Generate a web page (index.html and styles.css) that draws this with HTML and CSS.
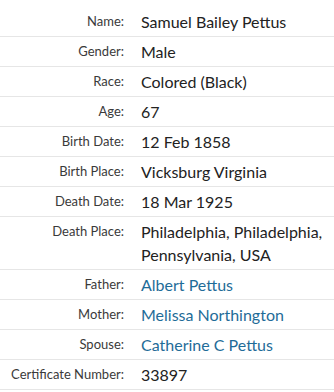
FILE: index.html
```html
<!DOCTYPE html>
<html>
<head>
<meta charset="utf-8">
<link rel="stylesheet" href="styles.css">
</head>
<body>
<div class="facts">
  <div class="row"><div class="label">Name:</div><div class="value">Samuel Bailey Pettus</div></div>
  <div class="row"><div class="label">Gender:</div><div class="value">Male</div></div>
  <div class="row"><div class="label">Race:</div><div class="value">Colored (Black)</div></div>
  <div class="row"><div class="label">Age:</div><div class="value">67</div></div>
  <div class="row"><div class="label">Birth Date:</div><div class="value">12 Feb 1858</div></div>
  <div class="row"><div class="label">Birth Place:</div><div class="value">Vicksburg Virginia</div></div>
  <div class="row"><div class="label">Death Date:</div><div class="value">18 Mar 1925</div></div>
  <div class="row"><div class="label">Death Place:</div><div class="value">Philadelphia, Philadelphia, Pennsylvania, USA</div></div>
  <div class="row"><div class="label">Father:</div><div class="value"><a class="link" href="#">Albert Pettus</a></div></div>
  <div class="row"><div class="label">Mother:</div><div class="value"><a class="link" href="#">Melissa Northington</a></div></div>
  <div class="row"><div class="label">Spouse:</div><div class="value"><a class="link" href="#">Catherine C Pettus</a></div></div>
  <div class="row"><div class="label">Certificate Number:</div><div class="value">33897</div></div>
</div>
</body>
</html>
```
FILE: styles.css
```css
html, body {
  margin: 0;
  padding: 0;
  background: #ffffff;
}
body {
  font-family: Lato, "Liberation Sans", sans-serif;
  padding-top: 7px;
}
.facts {
  display: flex;
  flex-direction: column;
}
.row {
  display: grid;
  grid-template-columns: 128px 1fr;
  column-gap: 13px;
  padding: 3px 0 3px;
  border-bottom: 1px solid #e6e6e6;
  line-height: 23px;
}
.label {
  text-align: right;
  padding-right: 4px;
  font-size: 13px;
  color: #3a3a3a;
}
.value {
  font-size: 16px;
  color: #222222;
  padding-right: 8px;
}
.link {
  color: #1f6c98;
  text-decoration: none;
}
```
